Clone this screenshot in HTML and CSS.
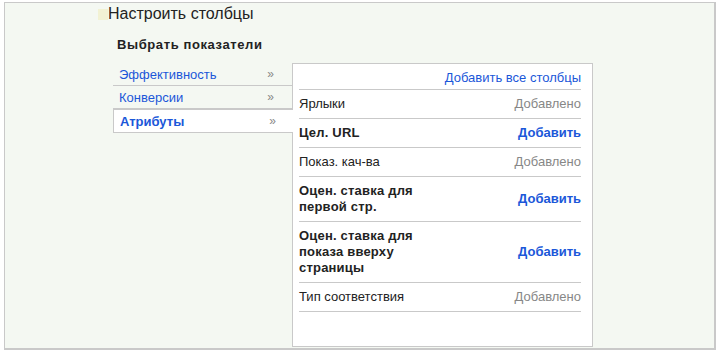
FILE: index.html
```html
<!doctype html>
<html lang="ru">
<head>
  <meta charset="utf-8" />
  <title>Настроить столбцы</title>
  <link rel="stylesheet" href="styles.css">
</head>
<body>
  <div class="frame">
    <h1 class="title"><span class="swatch"></span>Настроить столбцы</h1>

    <section class="picker">
      <h2>Выбрать показатели</h2>
      <div class="cols">
        <ul class="menu">
          <li><a href="#">Эффективность</a><span class="chev">»</span></li>
          <li><a href="#">Конверсии</a><span class="chev">»</span></li>
          <li class="on"><a href="#">Атрибуты</a><span class="chev">»</span></li>
        </ul>

        <div class="panel">
          <div class="head"><a href="#">Добавить все столбцы</a></div>
          <div class="row"><span class="lab">Ярлыки</span><span class="done">Добавлено</span></div>
          <div class="row strong"><span class="lab">Цел. URL</span><a href="#" class="add">Добавить</a></div>
          <div class="row"><span class="lab">Показ. кач-ва</span><span class="done">Добавлено</span></div>
          <div class="row strong"><span class="lab">Оцен. ставка для первой стр.</span><a href="#" class="add">Добавить</a></div>
          <div class="row strong"><span class="lab">Оцен. ставка для показа вверху страницы</span><a href="#" class="add">Добавить</a></div>
          <div class="row"><span class="lab">Тип соответствия</span><span class="done">Добавлено</span></div>
        </div>
      </div>
    </section>
  </div>
</body>
</html>
```

FILE: styles.css
```css
:root{
  --bg:#f4f8f2;
  --line:#c9c9c9;
  --fg:#222;
  --link:#1b57d9;
  --muted:#878787;
}

*{box-sizing:border-box}
body{margin:0; background:#fff; font-family:"Liberation Sans", Arial, sans-serif; color:var(--fg)}

.frame{
  margin:2px 0 0 4px; width:712px; height:348px;
  background:var(--bg);
  border:1px solid var(--line); border-right-width:2px; border-bottom-width:2px;
  padding:1px 0 0;
}

.title{margin:0; font-size:16px; line-height:20px; font-weight:normal; padding-left:93px; display:flex; align-items:center}
.swatch{flex:none; width:10px; height:11px; background:#f2f2d4; margin-top:1px}

.picker{padding-left:108px; margin-top:13px}
.picker h2{margin:0 0 10px 4px; font-size:13px; line-height:16px; font-weight:bold; letter-spacing:.6px}

.cols{display:flex; align-items:flex-start}

.menu{list-style:none; margin:0; padding:0; width:179px; font-size:13px}
.menu li{display:flex; justify-content:space-between; align-items:center; height:23px; padding:0 18px 0 6px; border-bottom:1px solid var(--line)}
.menu a{color:var(--link); text-decoration:none}
.menu .chev{color:#888; font-size:12px}
.menu li.on{background:#fff; border:1px solid var(--line); border-right:none; height:24px; margin-right:-1px; position:relative; z-index:1; padding-left:6px; padding-right:17px}
.menu li.on a{font-weight:bold}

.panel{width:301px; background:#fff; border:1px solid var(--line); padding:0 11px 34px 6px; font-size:13px; line-height:16px}
.head{text-align:right; padding:6px 0 3px; border-bottom:1px solid var(--line)}
.head a, .add{color:var(--link); text-decoration:none}

.row{display:flex; justify-content:space-between; align-items:center; padding:6px 0; border-bottom:1px solid var(--line)}
.row .lab{max-width:135px}
.row.strong .lab{font-weight:bold; letter-spacing:.2px}
.add{font-weight:bold}
.done{color:var(--muted)}
```
